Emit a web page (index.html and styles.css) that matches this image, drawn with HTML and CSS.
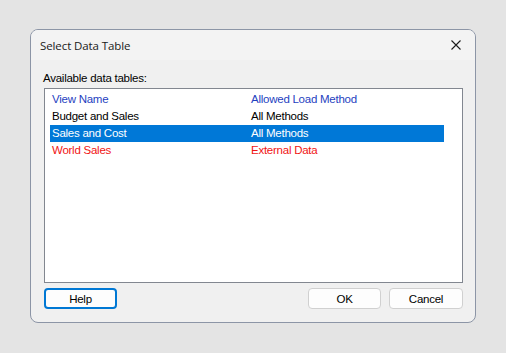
FILE: index.html
```html
<!DOCTYPE html>
<html lang="en">
<head>
  <meta charset="UTF-8" />
  <title>Select Data Table</title>
  <link rel="stylesheet" href="styles.css">
</head>
<body>
  <div class="dialog">
    <div class="title-bar">
      <span class="title">Select Data Table</span>
      <button class="close-btn" aria-label="Close">
        <svg width="10" height="10" viewBox="0 0 10 10">
          <path d="M0.5 0.5 L9.5 9.5 M9.5 0.5 L0.5 9.5" stroke="#1a1a1a" stroke-width="1.1" fill="none"/>
        </svg>
      </button>
    </div>
    <div class="dialog-body">
      <div class="label">Available data tables:</div>
      <div class="list">
        <div class="row header">
          <span class="col-name">View Name</span>
          <span class="col-method">Allowed Load Method</span>
        </div>
        <div class="row">
          <span class="col-name">Budget and Sales</span>
          <span class="col-method">All Methods</span>
        </div>
        <div class="row selected">
          <span class="col-name">Sales and Cost</span>
          <span class="col-method">All Methods</span>
        </div>
        <div class="row external">
          <span class="col-name">World Sales</span>
          <span class="col-method">External Data</span>
        </div>
      </div>
      <div class="buttons">
        <button class="btn btn-help">Help</button>
        <button class="btn btn-ok">OK</button>
        <button class="btn btn-cancel">Cancel</button>
      </div>
    </div>
  </div>
</body>
</html>
```

FILE: styles.css
```css
* {
  margin: 0;
  padding: 0;
  box-sizing: border-box;
}
body, html {
  height: 100%;
  font-family: 'Liberation Sans', Arial, sans-serif;
  font-size: 11.5px;
  letter-spacing: -0.25px;
  overflow: hidden;
}
body {
  background: #e4e4e4;
  padding: 29px 0 0 30px;
}

.dialog {
  width: 446px;
  height: 294px;
  border: 1px solid #8c95a6;
  border-radius: 8px;
  background: #f0f0f0;
  display: flex;
  flex-direction: column;
  overflow: hidden;
}

.title-bar {
  height: 30px;
  background: #f3f3f3;
  display: flex;
  align-items: center;
  padding: 0 9px;
  color: #1a1a1a;
}
.title {
  flex: 1;
  font-family: 'Open Sans', 'Liberation Sans', sans-serif;
  font-size: 11.5px;
  letter-spacing: -0.1px;
  padding-top: 1px;
}
.close-btn {
  border: none;
  background: transparent;
  width: 10px;
  height: 10px;
  margin-right: 5px;
  display: flex;
}

.dialog-body {
  flex: 1;
  display: flex;
  flex-direction: column;
  padding: 10px 12px 13px 13px;
}

.label {
  line-height: 16px;
  margin: 0 0 2px -1px;
  color: #000;
}

.list {
  height: 195px;
  background: #fff;
  border: 1px solid #828790;
  padding: 2px 0 0 5px;
}

.row {
  display: flex;
  width: 394px;
  height: 17px;
  line-height: 17px;
  padding-left: 2px;
  color: #000;
}
.col-name {
  width: 199px;
}
.header {
  color: #1f3fbf;
}
.selected {
  background: #0078d7;
  color: #fff;
}
.external {
  color: #f01414;
}

.buttons {
  display: flex;
  margin-top: 5px;
  gap: 8px;
}
.btn {
  height: 21px;
  width: 73px;
  font-family: 'Liberation Sans', Arial, sans-serif;
  font-size: 11.5px;
  letter-spacing: -0.25px;
  color: #000;
  background: #fdfdfd;
  border: 1px solid #d0d0d0;
  border-radius: 4px;
}
.btn-help {
  border: 2px solid #0078d4;
}
.btn-ok {
  margin-left: auto;
}
.btn-cancel {
  width: 74px;
}
```
